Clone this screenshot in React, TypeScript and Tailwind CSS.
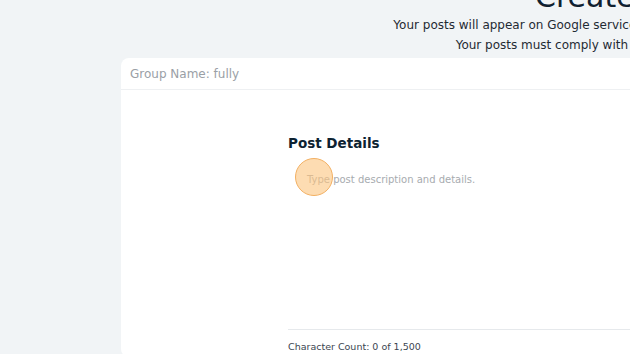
import React from 'react';

function App() {
  return (
    <div
      className="relative w-full h-[354px] overflow-hidden bg-[#f1f4f6]"
      style={{ fontFamily: '"DejaVu Sans", "Open Sans", sans-serif' }}
    >
      <div className="w-[1000px] ml-[121px] -mt-[21px]">
        <div className="text-center">
          <h1 className="text-[30px] leading-[36px] text-[#0f2030] font-normal">Create Post</h1>
          <p className="text-[12px] leading-[20px] text-[#1f2a33]">
            Your posts will appear on Google services such as Google Search and Maps.
          </p>
          <p className="text-[12px] leading-[20px] text-[#1f2a33]">
            Your posts must comply with Google's content policies.
          </p>
        </div>

        <div className="mt-[3px] bg-white rounded-lg">
          <div className="h-[32px] flex items-center px-[9px] border-b border-[#eef0f2]">
            <span className="text-[12px] text-[#9aa0a6]">Group Name: fully</span>
          </div>
          <div className="pl-[167px] pt-[42px]">
            <h2 className="text-[13.5px] leading-[22px] font-semibold text-[#0d2231]">Post Details</h2>
            <textarea
              className="block w-[700px] h-[168px] mt-[7px] pl-[19px] pt-[11px] text-[10px] resize-none outline-none placeholder:text-[#a7abaf]"
              placeholder="Type post description and details."
            />
            <div className="border-t border-[#e6e9ec] w-[700px] pt-[3px]">
              <span className="text-[9.5px] text-[#3b4550]">Character Count: 0 of 1,500</span>
            </div>
          </div>
        </div>
      </div>

      <div className="absolute left-[295px] top-[158px] w-[38px] h-[38px] rounded-full bg-[#fbc57e]/60 border border-[#f3b062]" />
    </div>
  );
}

export default App;
